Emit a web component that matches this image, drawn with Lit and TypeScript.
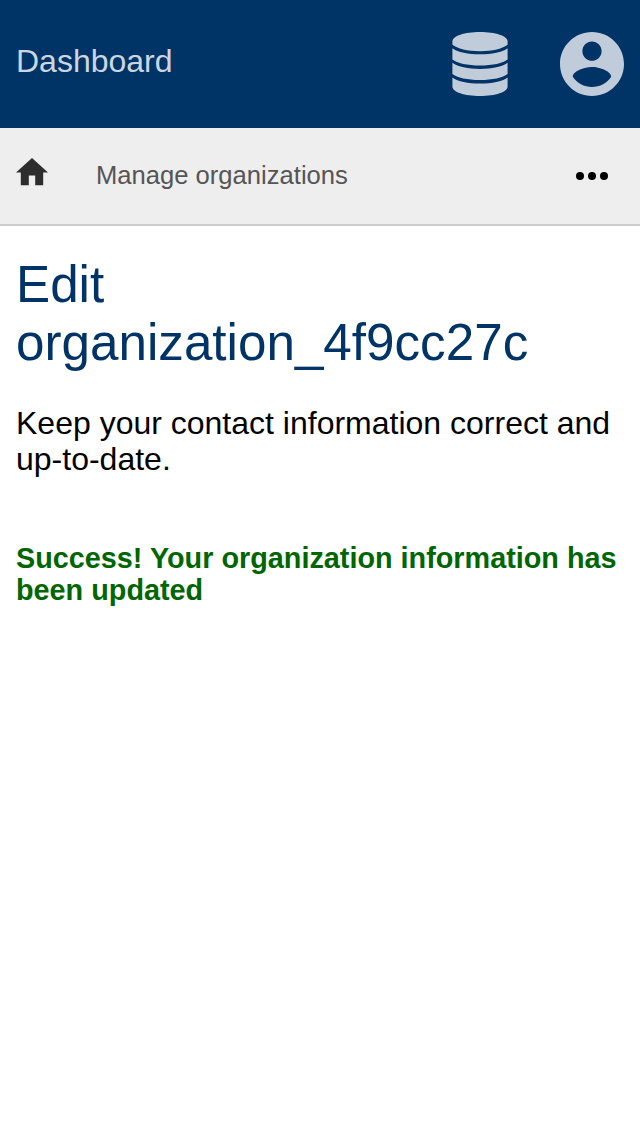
import { LitElement, html, css } from "lit";
import { customElement } from "lit/decorators.js";

@customElement("app-root")
export class AppRoot extends LitElement {
  static styles = css`
    :host { display: block; min-height: 1136px; background: #fff; color: #000; font-family: "Liberation Sans", Arial, sans-serif; }
    svg { display: block; }
    .top { display: flex; align-items: center; box-sizing: border-box; height: 128px; padding: 0 16px; background: #003366; color: #ccd6e0; font-size: 32px; }
    .brand { flex: 1; line-height: 36px; padding-bottom: 6px; }
    .user { margin-left: 52px; }
    .crumbs { display: flex; align-items: center; box-sizing: border-box; height: 98px; padding: 0 32px 0 16px; background: #eee; border-bottom: 2px solid #ccc; }
    .home { margin-bottom: 8px; }
    .crumb { flex: 1; margin-left: 48px; padding-bottom: 2px; color: #555; font-size: 25.6px; line-height: 30px; }
    main { padding: 30px 16px 0; }
    h1 { margin: 0; color: #003366; font-size: 51.2px; line-height: 58px; font-weight: 400; }
    .lead { margin: 33px 0 0; font-size: 32px; line-height: 36px; }
    .success { margin: 65px 0 0; color: #006600; font-size: 28.8px; line-height: 32px; font-weight: 700; }
  `;

  render() {
    return html`
      <header class="top">
        <span class="brand">Dashboard</span>
        <svg width="56" height="64" viewBox="0 0 56 64" fill="#c0ccd9">
          <path d="M.4 9.500C.4 4 12.500 0 28 0s27.600 4 27.600 9.500v3.300C51 16.600 40.500 19.200 28 19.200S5 16.600.4 12.800z"/>
          <path d="M.4 16.200C6 20.200 16 22.300 28 22.300s22-2.100 27.600-6.100v11.200C51 31.200 40.500 33.400 28 33.400S5 31.200.4 27.400z"/>
          <path d="M.4 30.800C6 34.800 16 36.900 28 36.900s22-2.100 27.600-6.100V42C51 45.800 40.500 48 28 48S5 45.800.4 42z"/>
          <path d="M.4 45.400C6 49.400 16 51.500 28 51.500s22-2.100 27.600-6.100v9.100C55.600 60 43.500 64 28 64S.4 60 .4 54.500z"/>
        </svg>
        <svg class="user" width="64" height="64" viewBox="2 2 20 20" fill="#c0ccd9">
          <path d="M12 2C6.480 2 2 6.480 2 12s4.480 10 10 10 10-4.480 10-10S17.520 2 12 2zm0 3c1.660 0 3 1.340 3 3s-1.340 3-3 3-3-1.340-3-3 1.340-3 3-3zm0 14.200c-2.500 0-4.710-1.280-6-3.220.03-1.990 4-3.080 6-3.080 1.990 0 5.970 1.090 6 3.080-1.290 1.940-3.500 3.220-6 3.220z"/>
        </svg>
      </header>
      <nav class="crumbs">
        <svg class="home" width="32" height="27.2" viewBox="2 3 20 17" fill="#2d2d2d"><path d="M10 20v-6h4v6h5v-8h3L12 3 2 12h3v8z"/></svg>
        <span class="crumb">Manage organizations</span>
        <svg width="32" height="8" viewBox="0 0 32 8"><circle cx="4" cy="4" r="4"/><circle cx="16" cy="4" r="4"/><circle cx="28" cy="4" r="4"/></svg>
      </nav>
      <main>
        <h1>Edit organization_4f9cc27c</h1>
        <p class="lead">Keep your contact information correct and up-to-date.</p>
        <p class="success">Success! Your organization information has been updated</p>
      </main>
    `;
  }
}
